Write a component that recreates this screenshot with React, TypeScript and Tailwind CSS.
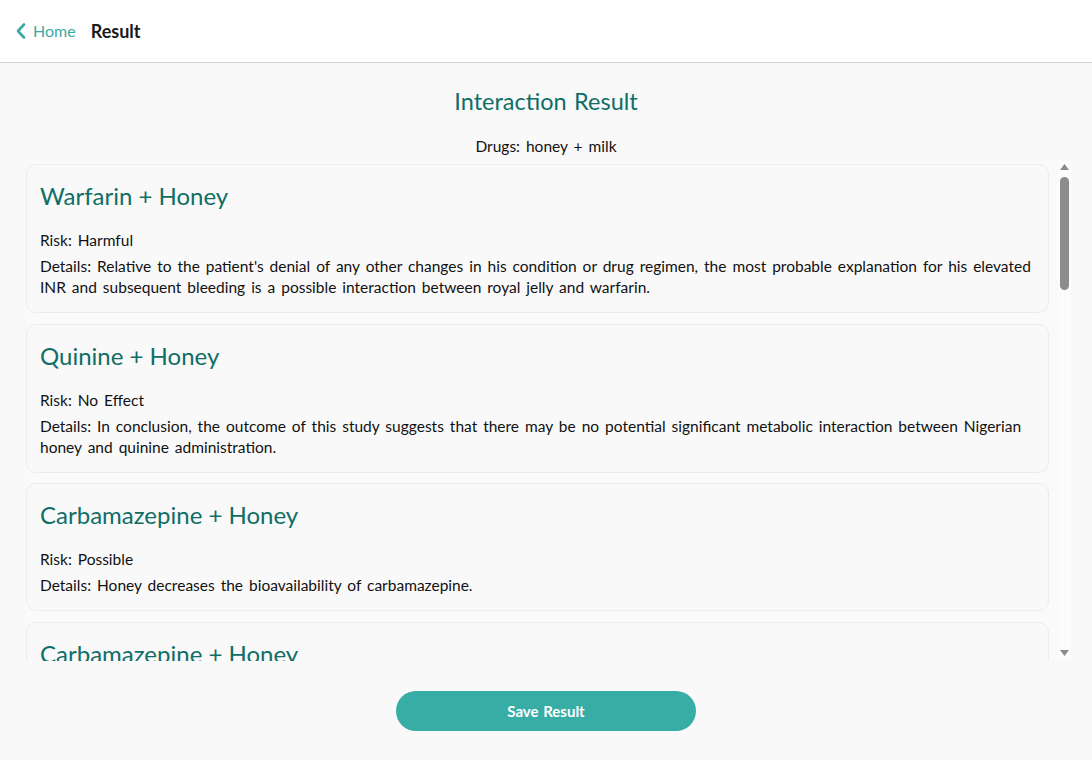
import React from "react";

const items = [
  {
    title: "Warfarin + Honey",
    risk: "Harmful",
    details:
      "Relative to the patient's denial of any other changes in his condition or drug regimen, the most probable explanation for his elevated INR and subsequent bleeding is a possible interaction between royal jelly and warfarin.",
  },
  {
    title: "Quinine + Honey",
    risk: "No Effect",
    details:
      "In conclusion, the outcome of this study suggests that there may be no potential significant metabolic interaction between Nigerian honey and quinine administration.",
  },
  {
    title: "Carbamazepine + Honey",
    risk: "Possible",
    details: "Honey decreases the bioavailability of carbamazepine.",
  },
  {
    title: "Carbamazepine + Honey",
    risk: "Possible",
    details: "Honey decreases the bioavailability of carbamazepine.",
  },
];

export default function App() {
  return (
    <div
      className="w-[1092px] h-[760px] bg-[#f9f9f9] flex flex-col overflow-hidden text-[#111]"
      style={{ fontFamily: "Lato, 'Noto Sans', sans-serif" }}
    >
      <header className="h-[63px] shrink-0 bg-white border-b border-[#d4d4d4] flex items-center px-[14px]">
        <svg width="14" height="18" viewBox="0 0 14 18" className="mr-[5px]">
          <path d="M10 2.5 L4 9 L10 15.5" fill="none" stroke="#3aa9a3" strokeWidth="2.6" strokeLinecap="round" strokeLinejoin="round" />
        </svg>
        <span className="text-[16px] text-[#3aa9a3] leading-none">Home</span>
        <span className="ml-[15px] text-[18px] font-bold text-[#1a1a1a] leading-none">Result</span>
      </header>

      <div className="flex flex-col items-center pt-[24px]">
        <h1 className="text-[23.5px] leading-[28px] text-[#0f6e66] [word-spacing:1.5px]">Interaction Result</h1>
        <p className="mt-[21px] text-[15.5px] leading-[21px] text-[#111] [word-spacing:2px]">Drugs: honey + milk</p>
      </div>

      <div className="mt-[5px] ml-[26px] w-[1045px] h-[499px] flex bg-[#fafafa]">
        <div className="flex-1 overflow-hidden pt-[2px] flex flex-col gap-[10.5px] pr-[9px]">
          {items.map((it, i) => (
            <div
              key={i}
              className="shrink-0 rounded-[10px] border border-[#ececec] bg-[#f9f9f9] px-[13px] pt-[15px] pb-[14px]"
            >
              <h2 className="text-[24px] leading-[32px] text-[#0f6e66]">{it.title}</h2>
              <p className="mt-[18px] text-[15.5px] leading-[21px] [word-spacing:2px]">Risk: {it.risk}</p>
              <p className="mt-[5px] text-[15.5px] leading-[21px] [word-spacing:2px]">Details: {it.details}</p>
            </div>
          ))}
        </div>
        <div className="w-[13px] shrink-0 bg-[#fcfcfc] flex flex-col items-center">
          <svg width="9" height="6" viewBox="0 0 9 6" className="mt-[2px]">
            <path d="M4.5 0 L9 6 L0 6 Z" fill="#8a8a8a" />
          </svg>
          <div className="mt-[7px] w-[9px] h-[113px] rounded-full bg-[#8c8c8c]" />
          <div className="flex-1" />
          <svg width="9" height="6" viewBox="0 0 9 6" className="mb-[5px]">
            <path d="M0 0 L9 0 L4.5 6 Z" fill="#8a8a8a" />
          </svg>
        </div>
      </div>

      <div className="flex justify-center mt-[30px]">
        <button className="w-[300px] h-[40px] rounded-full bg-[#38ada6] text-white text-[15px] font-bold [word-spacing:1px]">
          Save Result
        </button>
      </div>
    </div>
  );
}
